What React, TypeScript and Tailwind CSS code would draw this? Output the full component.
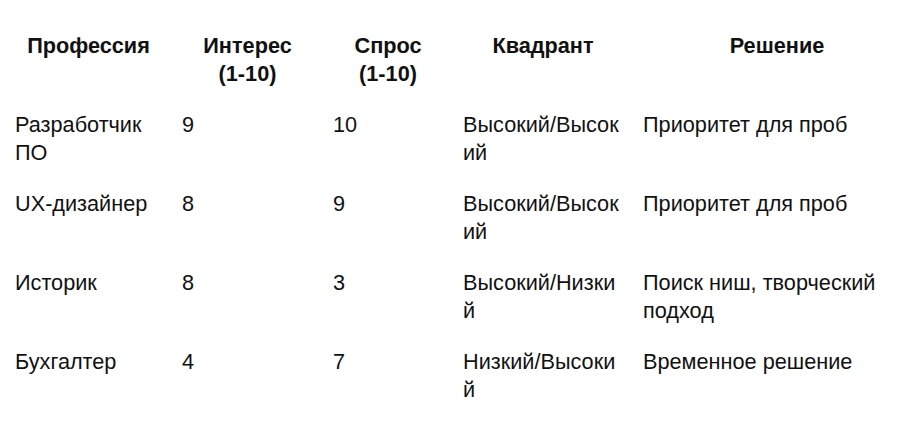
import React from "react";

const rows = [
  ["Разработчик ПО", "9", "10", "Высокий/Высокий", "Приоритет для проб"],
  ["UX-дизайнер", "8", "9", "Высокий/Высокий", "Приоритет для проб"],
  ["Историк", "8", "3", "Высокий/Низкий", "Поиск ниш, творческий подход"],
  ["Бухгалтер", "4", "7", "Низкий/Высокий", "Временное решение"],
];

export default function App() {
  return (
    <div
      className="w-[897px] h-[437px] overflow-hidden bg-white text-[#111] pt-[21px]"
      style={{ fontFamily: '"Liberation Sans", Arial, sans-serif' }}
    >
      <table className="table-fixed border-collapse ml-[5px] w-[916px] text-[21.7px] leading-[28px]">
        <colgroup>
          <col className="w-[167px]" />
          <col className="w-[151px]" />
          <col className="w-[130px]" />
          <col className="w-[180px]" />
          <col className="w-[288px]" />
        </colgroup>
        <thead>
          <tr>
            <th className="px-[10px] pt-[11px] pb-[12px] align-top text-center font-bold">Профессия</th>
            <th className="px-[10px] pt-[11px] pb-[12px] align-top text-center font-bold">Интерес<br />(1-10)</th>
            <th className="px-[10px] pt-[11px] pb-[12px] align-top text-center font-bold">Спрос<br />(1-10)</th>
            <th className="px-[10px] pt-[11px] pb-[12px] align-top text-center font-bold">Квадрант</th>
            <th className="px-[10px] pt-[11px] pb-[12px] align-top text-center font-bold">Решение</th>
          </tr>
        </thead>
        <tbody>
          {rows.map((r, i) => (
            <tr key={i}>
              {r.map((c, j) => (
                <td
                  key={j}
                  className={
                    j === 3
                      ? "px-[10px] pt-[11px] pb-[12px] align-top text-left break-all"
                      : "px-[10px] pt-[11px] pb-[12px] align-top text-left"
                  }
                >
                  {c}
                </td>
              ))}
            </tr>
          ))}
        </tbody>
      </table>
    </div>
  );
}
